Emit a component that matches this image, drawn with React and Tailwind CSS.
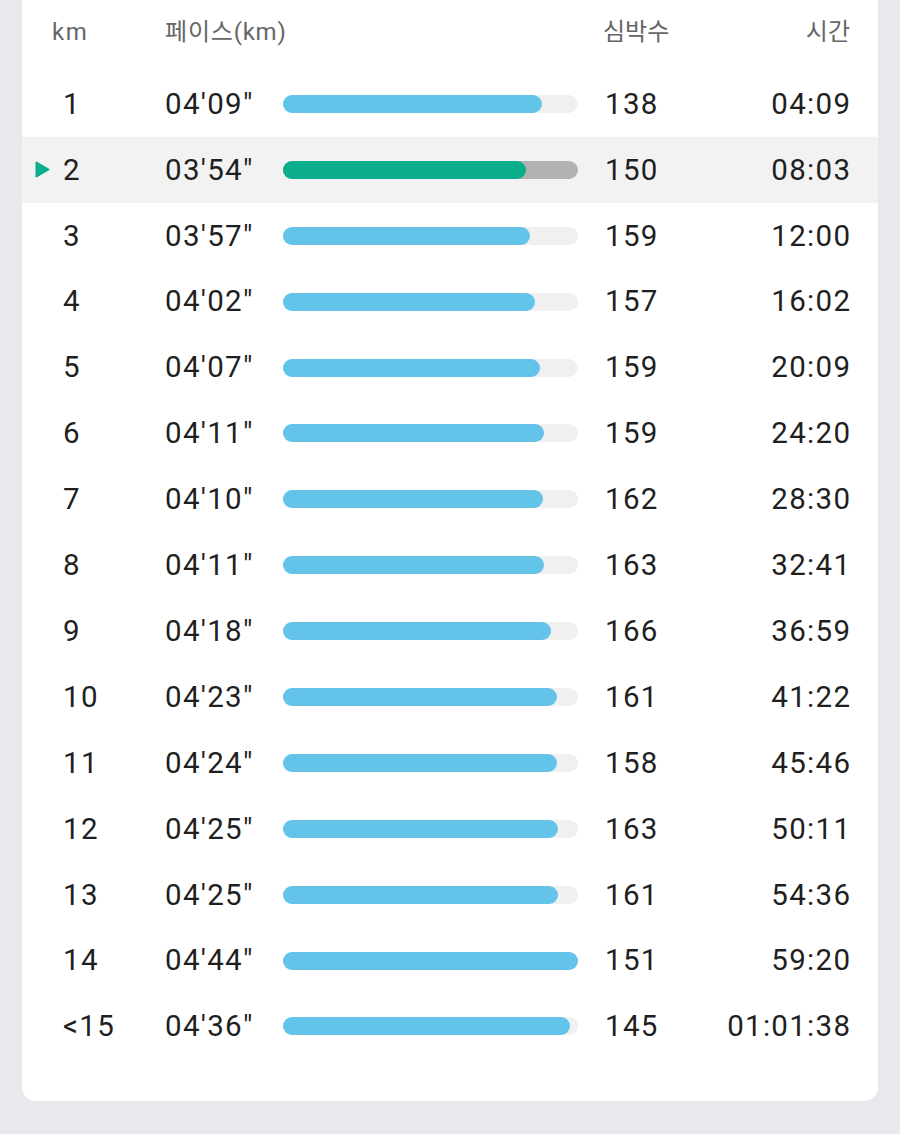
import React from "react";

const rows = [
  { km: "1", pace: "04'09\"", end: 542, hr: "138", time: "04:09" },
  { km: "2", pace: "03'54\"", end: 526, hr: "150", time: "08:03", active: true },
  { km: "3", pace: "03'57\"", end: 530, hr: "159", time: "12:00" },
  { km: "4", pace: "04'02\"", end: 535, hr: "157", time: "16:02" },
  { km: "5", pace: "04'07\"", end: 540, hr: "159", time: "20:09" },
  { km: "6", pace: "04'11\"", end: 544, hr: "159", time: "24:20" },
  { km: "7", pace: "04'10\"", end: 543, hr: "162", time: "28:30" },
  { km: "8", pace: "04'11\"", end: 544, hr: "163", time: "32:41" },
  { km: "9", pace: "04'18\"", end: 551, hr: "166", time: "36:59" },
  { km: "10", pace: "04'23\"", end: 557, hr: "161", time: "41:22" },
  { km: "11", pace: "04'24\"", end: 557, hr: "158", time: "45:46" },
  { km: "12", pace: "04'25\"", end: 558, hr: "163", time: "50:11" },
  { km: "13", pace: "04'25\"", end: 558, hr: "161", time: "54:36" },
  { km: "14", pace: "04'44\"", end: 578, hr: "151", time: "59:20" },
  { km: "<15", pace: "04'36\"", end: 570, hr: "145", time: "01:01:38" },
];

const font = { fontFamily: "Roboto, 'Noto Sans CJK KR', sans-serif" };

const SplitRow = ({ row }) => {
  const fill = row.end - 283;
  return (
    <div
      className={`flex items-center h-[65.9px] pl-[13px] pr-[28px] text-[29.5px] tracking-[1.3px] text-[#1f1f1f] ${
        row.active ? "bg-[#f2f2f2]" : ""
      }`}
    >
      <div className="w-[28px] flex items-center">
        {row.active && (
          <svg width="15" height="17" viewBox="0 0 15 17">
            <path d="M1.5 1.5 L13.5 8.5 L1.5 15.5 Z" fill="#0aae8a" stroke="#0aae8a" strokeWidth="2" strokeLinejoin="round" />
          </svg>
        )}
      </div>
      <div className="w-[102px]">{row.km}</div>
      <div className="w-[118px]">{row.pace}</div>
      <div
        className={`w-[295px] h-[18px] rounded-full ${
          row.active ? "bg-[#b2b2b2]" : "bg-[#f0f0f1]"
        }`}
      >
        <div
          className={`h-full rounded-full ${row.active ? "bg-[#0aae8a]" : "bg-[#63c3e8]"}`}
          style={{ width: fill }}
        />
      </div>
      <div className="ml-[27px] flex-1">{row.hr}</div>
      <div className="text-right -mr-[1.3px]">{row.time}</div>
    </div>
  );
};

export default function App() {
  return (
    <div className="w-[900px] h-[1134px] bg-[#e8e9ed] pl-[22px] pr-[22px]" style={font}>
      <div className="bg-white rounded-b-[14px] pb-[42px]">
        <div className="flex items-center h-[71px] pb-[7px] pl-[30px] pr-[28px] text-[24px] text-[#666]">
          <div className="w-[113px] tracking-[1.5px]">km</div>
          <div className="w-[438px] tracking-[0.8px]">페이스(km)</div>
          <div className="flex-1">심박수</div>
          <div>시간</div>
        </div>
        {rows.map((row) => (
          <SplitRow key={row.km} row={row} />
        ))}
      </div>
    </div>
  );
}
